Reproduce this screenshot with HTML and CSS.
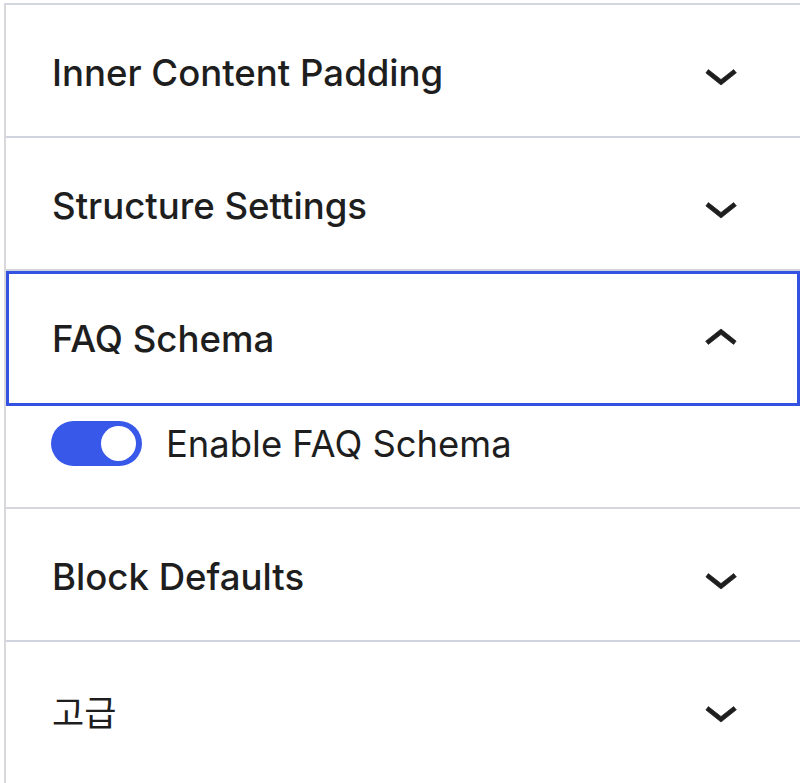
FILE: index.html
```html
<!DOCTYPE html>
<html lang="en">
<head>
<meta charset="utf-8">
<title>Settings</title>
<link rel="stylesheet" href="styles.css">
</head>
<body>
<div class="sidebar">
  <div class="panel">
    <button class="panel-head"><span class="title">Inner Content Padding</span>
      <svg class="chev" viewBox="0 0 24 24"><path d="M17.5 11.6L12 16l-5.5-4.4.9-1.2L12 14l4.6-3.6 1 1.2z"/></svg></button>
  </div>
  <div class="panel">
    <button class="panel-head"><span class="title">Structure Settings</span>
      <svg class="chev" viewBox="0 0 24 24"><path d="M17.5 11.6L12 16l-5.5-4.4.9-1.2L12 14l4.6-3.6 1 1.2z"/></svg></button>
  </div>
  <div class="panel open">
    <button class="panel-head focused"><span class="title">FAQ Schema</span>
      <svg class="chev" viewBox="0 0 24 24"><path d="M6.5 12.4L12 8l5.5 4.4-.9 1.2L12 10l-4.6 3.6-1-1.2z"/></svg></button>
    <div class="panel-body">
      <label class="toggle-row">
        <span class="toggle"><span class="knob"></span></span>
        <span class="toggle-label">Enable FAQ Schema</span>
      </label>
    </div>
  </div>
  <div class="panel">
    <button class="panel-head"><span class="title">Block Defaults</span>
      <svg class="chev" viewBox="0 0 24 24"><path d="M17.5 11.6L12 16l-5.5-4.4.9-1.2L12 14l4.6-3.6 1 1.2z"/></svg></button>
  </div>
  <div class="panel last">
    <button class="panel-head"><span class="title">고급</span>
      <svg class="chev" viewBox="0 0 24 24"><path d="M17.5 11.6L12 16l-5.5-4.4.9-1.2L12 14l4.6-3.6 1 1.2z"/></svg></button>
  </div>
</div>
</body>
</html>
```

FILE: styles.css
```css
html, body {
  margin: 0;
  padding: 0;
  background: #ffffff;
}
body {
  font-family: Inter, "Noto Sans", "Noto Sans CJK KR", sans-serif;
  color: #1e1e1e;
  height: 783px;
  overflow: hidden;
}
.sidebar {
  box-sizing: border-box;
  margin: 3px 0 0 4px;
  border-left: 2px solid #d8d8dc;
  border-top: 2px solid #d3d6df;
  height: 780px;
}
.panel {
  border-bottom: 2px solid #cfd3df;
}
.panel.open {
  border-bottom-color: #d4d6dc;
}
.panel.last {
  border-bottom: 0;
}
.panel-head {
  display: flex;
  align-items: center;
  justify-content: space-between;
  width: 100%;
  height: 131px;
  box-sizing: border-box;
  padding: 6px 46px 0 46px;
  margin: 0;
  border: 0;
  background: #ffffff;
  font-family: Inter, "Noto Sans CJK KR", sans-serif;
  font-size: 36.6px;
  font-weight: 500;
  color: #1e1e1e;
  text-align: left;
}
.panel-head.focused {
  height: 135px;
  padding-top: 2px;
  box-shadow: inset 0 0 0 3px #3452e1;
}
.title {
  line-height: 1.2;
}
.chev {
  width: 66px;
  height: 66px;
  fill: #1e1e1e;
  stroke: #1e1e1e;
  stroke-width: 0.25;
  flex: none;
}
.panel-body {
  padding: 15px 44px 41px 45px;
}
.toggle-row {
  display: flex;
  align-items: center;
  height: 45px;
}
.toggle {
  position: relative;
  width: 91px;
  height: 45px;
  border-radius: 23px;
  background: #3858e9;
  flex: none;
}
.knob {
  position: absolute;
  top: 5px;
  right: 6px;
  width: 35px;
  height: 35px;
  border-radius: 50%;
  background: #ffffff;
}
.toggle-label {
  margin-left: 24px;
  font-size: 36.4px;
  font-weight: 400;
  color: #1e1e1e;
}
.panel.last .title {
  font-family: "Noto Sans CJK KR", Inter, sans-serif;
  font-weight: 400;
  font-size: 35px;
}
```
